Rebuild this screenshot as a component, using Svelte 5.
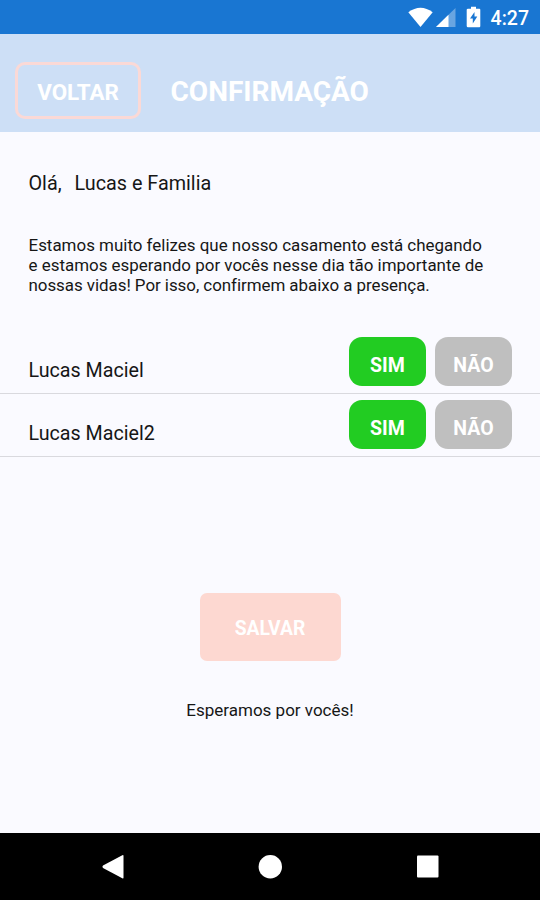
<script>
  const guests = [{ name: 'Lucas Maciel' }, { name: 'Lucas Maciel2' }];
  let answers = $state(guests.map(() => true));
</script>

<div class="screen">
  <div class="status">
    <svg width="160" height="34" viewBox="380 0 160 34" fill="#fff" aria-hidden="true">
      <path d="M408.3 12.3Q420.5 3.2 432.7 12.3L420.5 27Z" />
      <path d="M455.5 8V27H436Z" opacity=".35" />
      <path d="M448.5 14.8V27H436Z" />
      <path fill-rule="evenodd" d="M471 6.7h5v2h3.3q1 0 1 1V26q0 1.300-1 1.300H468q-1.300 0-1.300-1.300V9.700q0-1 1.300-1h3ZM474.500 12l-4.500 6.500h2.800v5l4.500-7h-2.800Z" />
    </svg>
    <span class="clock">4:27</span>
  </div>

  <header>
    <button class="back">VOLTAR</button>
    <h1>CONFIRMAÇÃO</h1>
  </header>

  <main>
    <p class="hello"><span>Olá,</span><span>Lucas e Familia</span></p>
    <p class="message">
      <span>Estamos muito felizes que nosso casamento está chegando</span>
      <span>e estamos esperando por vocês nesse dia tão importante de</span>
      <span class="last">nossas vidas! Por isso, confirmem abaixo a presença.</span>
    </p>

    <ul>
      {#each guests as guest, i}
        <li>
          <span class="name">{guest.name}</span>
          <button class="choice" class:yes={answers[i]} onclick={() => (answers[i] = true)}>SIM</button>
          <button class="choice" class:no={!answers[i]} onclick={() => (answers[i] = false)}>NÃO</button>
        </li>
      {/each}
    </ul>

    <button class="save">SALVAR</button>
    <p class="bye">Esperamos por vocês!</p>
  </main>

  <nav>
    <svg width="540" height="66" viewBox="0 0 540 66" fill="#fff" aria-hidden="true">
      <path d="M122.300 22.200q1.200-.600 1.200.700V44.500q0 1.300-1.200.700L103 34.900q-1.300-1.200 0-2.400Z" />
      <circle cx="270.300" cy="33.700" r="11.700" />
      <rect x="417" y="22.500" width="21.500" height="22" rx="1" />
    </svg>
  </nav>
</div>

<style>
  :global(body) { margin: 0; }
  .screen {
    width: 540px;
    height: 900px;
    display: flex;
    flex-direction: column;
    overflow: hidden;
    background: #fafaff;
    color: #161616;
    font-family: Roboto, sans-serif;
  }
  button {
    box-sizing: border-box;
    padding: 0;
    border: 0;
    color: #fff;
    font-family: inherit;
    font-weight: 700;
  }
  p, h1, ul { margin: 0; padding: 0; }
  .status {
    height: 34px;
    flex: none;
    display: flex;
    justify-content: flex-end;
    background: #1976d2;
    position: relative;
  }
  .status svg { display: block; }
  .clock {
    position: absolute;
    right: 11px;
    top: 0;
    line-height: 37px;
    font-size: 19.500px;
    font-weight: 500;
    color: #fff;
  }
  header {
    height: 98px;
    flex: none;
    box-sizing: border-box;
    display: flex;
    align-items: flex-start;
    padding: 28px 0 0 15px;
    background: #cddff6;
  }
  .back {
    width: 126px;
    height: 57px;
    border: 3px solid #fbd9d6;
    border-radius: 10px;
    background: none;
    font-size: 22.400px;
    padding-top: 3px;
  }
  h1 {
    margin-left: 29.500px;
    line-height: 60px;
    font-size: 28px;
    font-weight: 700;
    color: #fff;
  }
  main {
    flex: 1;
    display: flex;
    flex-direction: column;
    align-items: center;
  }
  .hello {
    align-self: stretch;
    padding: 40px 28.500px 0;
    display: flex;
    gap: 13px;
    font-size: 19.800px;
    line-height: 24px;
  }
  .message {
    align-self: stretch;
    margin-top: 39px;
    padding-left: 28.500px;
    display: flex;
    flex-direction: column;
    align-items: flex-start;
    font-size: 16.950px;
    line-height: 20px;
    white-space: nowrap;
  }
  .last { letter-spacing: -.05px; }
  ul {
    align-self: stretch;
    list-style: none;
    margin-top: 36px;
  }
  li {
    box-sizing: border-box;
    height: 63px;
    display: flex;
    align-items: flex-start;
    gap: 9px;
    padding: 6px 28px 0 28.500px;
    border-bottom: 1px solid #d9d9de;
  }
  .name {
    flex: 1;
    padding-top: 22px;
    font-size: 19.700px;
    line-height: 24px;
  }
  .choice {
    width: 77px;
    height: 49px;
    padding-top: 8px;
    border-radius: 13px;
    background: #bfbfbf;
    font-size: 19.500px;
  }
  .choice.yes, .choice.no { background: #22cc22; }
  .save {
    width: 141px;
    height: 68px;
    margin-top: 136px;
    padding-top: 2px;
    border-radius: 7px;
    background: #fdd8d1;
    font-size: 19.300px;
  }
  .bye {
    margin-top: 39px;
    font-size: 17px;
    line-height: 20px;
  }
  nav {
    height: 67px;
    flex: none;
    background: #000;
  }
  nav svg { display: block; }
</style>
